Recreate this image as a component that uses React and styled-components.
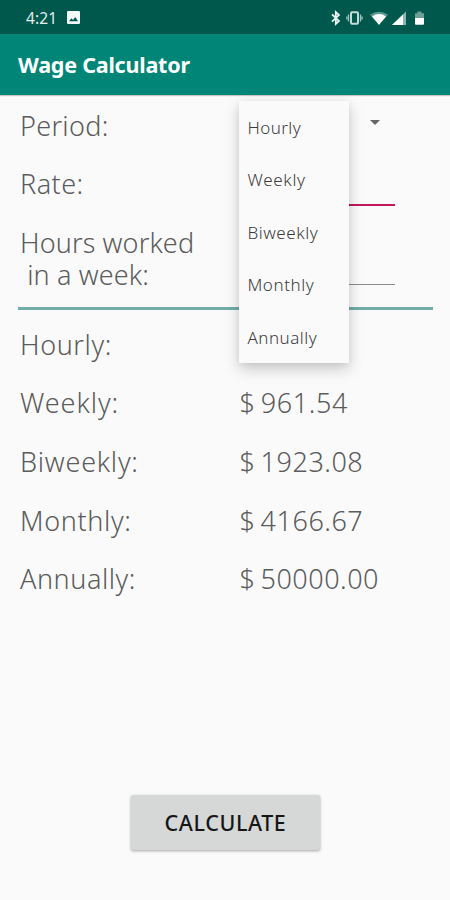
import React, { useState } from "react";
import styled, { createGlobalStyle } from "styled-components";

const GlobalStyle = createGlobalStyle`
  * {
    box-sizing: border-box;
  }

  body {
    margin: 0;
    background: #fafafa;
    font-family: "Noto Sans", "Open Sans", sans-serif;
  }
`;

const Screen = styled.div`
  width: 450px;
  height: 900px;
  display: flex;
  flex-direction: column;
  overflow: hidden;
  background: #fafafa;
`;

const StatusBar = styled.div`
  height: 34px;
  flex: none;
  display: flex;
  align-items: center;
  justify-content: space-between;
  padding: 1px 24px 0 26px;
  background: #00574b;
  color: #e4efed;
  font-size: 15.5px;
`;

const StatusGroup = styled.div`
  display: flex;
  align-items: center;
  gap: ${(props) => props.$gap || 0}px;
`;

const Clock = styled.span`
  letter-spacing: 0.1px;
`;

const Toolbar = styled.header`
  height: 61px;
  flex: none;
  display: flex;
  align-items: center;
  padding: 0 18px 1px;
  background: #008577;
  box-shadow: 0 1px 1px rgba(0, 0, 0, 0.2);
`;

const Title = styled.h1`
  margin: 0;
  color: #fff;
  font-size: 21.5px;
  font-weight: 700;
  letter-spacing: -0.22px;
  white-space: nowrap;
`;

const Form = styled.div`
  height: 212px;
  flex: none;
  display: flex;
  flex-direction: column;
  gap: 26.7px;
  padding: 14.5px 0 0 20px;
`;

const Row = styled.div`
  display: grid;
  grid-template-columns: 219px 156px;
  height: ${(props) => (props.$lines || 1) * 32}px;
  color: #5c5c5c;
  font-size: 27px;
  font-weight: 300;
  line-height: 32px;
`;

const Label = styled.div`
  white-space: pre;
  letter-spacing: ${(props) => props.$spacing || 0}px;
`;

const Amount = styled.div`
  padding-left: 0.6px;
  white-space: nowrap;
  letter-spacing: ${(props) => props.$spacing || 0}px;
  word-spacing: -2.5px;
`;

const Field = styled.div`
  align-self: start;
  height: ${(props) => props.$height}px;
  border-bottom: ${(props) =>
    props.$focused ? "2px solid #c2185b" : "1px solid #8c8c8c"};
`;

const Spinner = styled.div`
  position: relative;
  display: flex;
  justify-content: flex-end;
  padding: 10px 15px 0 0;
`;

const Arrow = styled.span`
  width: 0;
  height: 0;
  border: 5px solid transparent;
  border-top-color: #666;
  border-bottom-width: 0;
`;

const Menu = styled.ul`
  position: absolute;
  top: -8.5px;
  left: 0;
  z-index: 2;
  width: 110px;
  height: 262px;
  margin: 0;
  padding: 0;
  list-style: none;
  display: grid;
  grid-template-rows: repeat(5, 52.4px);
  background: #fafafa;
  box-shadow: 0 6px 14px rgba(0, 0, 0, 0.2), 0 1px 6px rgba(0, 0, 0, 0.06);
`;

const MenuItem = styled.li`
  display: flex;
  align-items: center;
  padding: 1.5px 0 0 8.5px;
  color: #3c3c3c;
  font-size: 17px;
  font-weight: 300;
  cursor: pointer;
  letter-spacing: ${(props) => props.$spacing || 0}px;
`;

const Divider = styled.div`
  height: 3px;
  flex: none;
  margin: 0 17px 0 18px;
  background: #71aca6;
`;

const Results = styled.div`
  flex: 1;
  display: flex;
  flex-direction: column;
  gap: 26.7px;
  padding: 18.6px 0 0 20px;
`;

const Footer = styled.footer`
  flex: none;
  display: flex;
  justify-content: center;
  padding: 0 0 50px 1px;
`;

const Button = styled.button`
  width: 189px;
  height: 55px;
  border: 0;
  border-radius: 2px;
  padding: 0 0 1px;
  background: #d6d8d7;
  box-shadow: 0 1px 3px rgba(0, 0, 0, 0.35);
  color: #161616;
  font-family: inherit;
  font-size: 21.5px;
  font-weight: 500;
  letter-spacing: 0.6px;
  cursor: pointer;
`;

const periods = [
  { name: "Hourly", amount: "", label: 0.6, value: 0, item: 0.4 },
  { name: "Weekly", amount: "$ 961.54", label: 0.95, value: 0.6, item: 0.7 },
  { name: "Biweekly", amount: "$ 1923.08", label: 0.75, value: 0.52, item: 0.55 },
  { name: "Monthly", amount: "$ 4166.67", label: 0.65, value: 0.52, item: 0.55 },
  { name: "Annually", amount: "$ 50000.00", label: 0.55, value: 0.5, item: 0.5 },
];

const PictureIcon = () => (
  <svg width="13" height="13" viewBox="0 0 13 13">
    <rect width="13" height="13" rx="1.3" fill="#f2f8f7" />
    <path d="M2 10.3 4.5 7.2 6 9 8.3 6 11 10.3z" fill="#00574b" />
  </svg>
);

const StatusIcons = () => (
  <svg width="96" height="18" viewBox="0 0 96 18" fill="none">
    <path
      d="M2 5.3 9 12 5.8 15V3L9 6 2 12.7"
      stroke="#e8f2f0"
      strokeWidth="1.8"
    />
    <rect x="21" y="3.2" width="7" height="11.6" rx="1" stroke="#c4dbd8" strokeWidth="2" />
    <path d="M18.5 5.5v7M30.5 5.5v7M16.9 7.5v3M32.1 7.5v3" stroke="#9fc3be" strokeWidth="1.3" />
    <path d="M40 5.7Q49 -0.4 58 5.7L49 16z" fill="#5e9a93" />
    <path d="M42 7.4Q49 2.8 56 7.4L49 15.8z" fill="#fff" />
    <path d="M62 16 76 2.5V16z" fill="#8bb6b1" />
    <path d="M62 16 73 5.4V16z" fill="#fff" />
    <path d="M85 4.2h2.3V2.6h4.2v1.6H94V9h-9z" fill="#6d9f99" />
    <path d="M85 9h9v5.8q0 1-1 1h-7q-1 0-1-1z" fill="#fff" />
  </svg>
);

const App = () => {
  const [menuOpen, setMenuOpen] = useState(true);

  return (
    <>
      <GlobalStyle />
      <Screen>
        <StatusBar>
          <StatusGroup $gap={10}>
            <Clock>4:21</Clock>
            <PictureIcon />
          </StatusGroup>
          <StatusIcons />
        </StatusBar>
        <Toolbar>
          <Title>Wage Calculator</Title>
        </Toolbar>
        <Form>
          <Row>
            <Label $spacing={0.3}>Period:</Label>
            <Spinner onClick={() => setMenuOpen(!menuOpen)}>
              <Arrow />
              {menuOpen && (
                <Menu>
                  {periods.map((period) => (
                    <MenuItem key={period.name} $spacing={period.item}>
                      {period.name}
                    </MenuItem>
                  ))}
                </Menu>
              )}
            </Spinner>
          </Row>
          <Row>
            <Label $spacing={0.45}>Rate:</Label>
            <Field $height={38} $focused />
          </Row>
          <Row $lines={2}>
            <Label $spacing={0.12}>{"Hours worked\n in a week:"}</Label>
            <Field $height={58} />
          </Row>
        </Form>
        <Divider />
        <Results>
          {periods.map((period) => (
            <Row key={period.name}>
              <Label $spacing={period.label}>{period.name}:</Label>
              <Amount $spacing={period.value}>{period.amount}</Amount>
            </Row>
          ))}
        </Results>
        <Footer>
          <Button>CALCULATE</Button>
        </Footer>
      </Screen>
    </>
  );
};

export default App;
